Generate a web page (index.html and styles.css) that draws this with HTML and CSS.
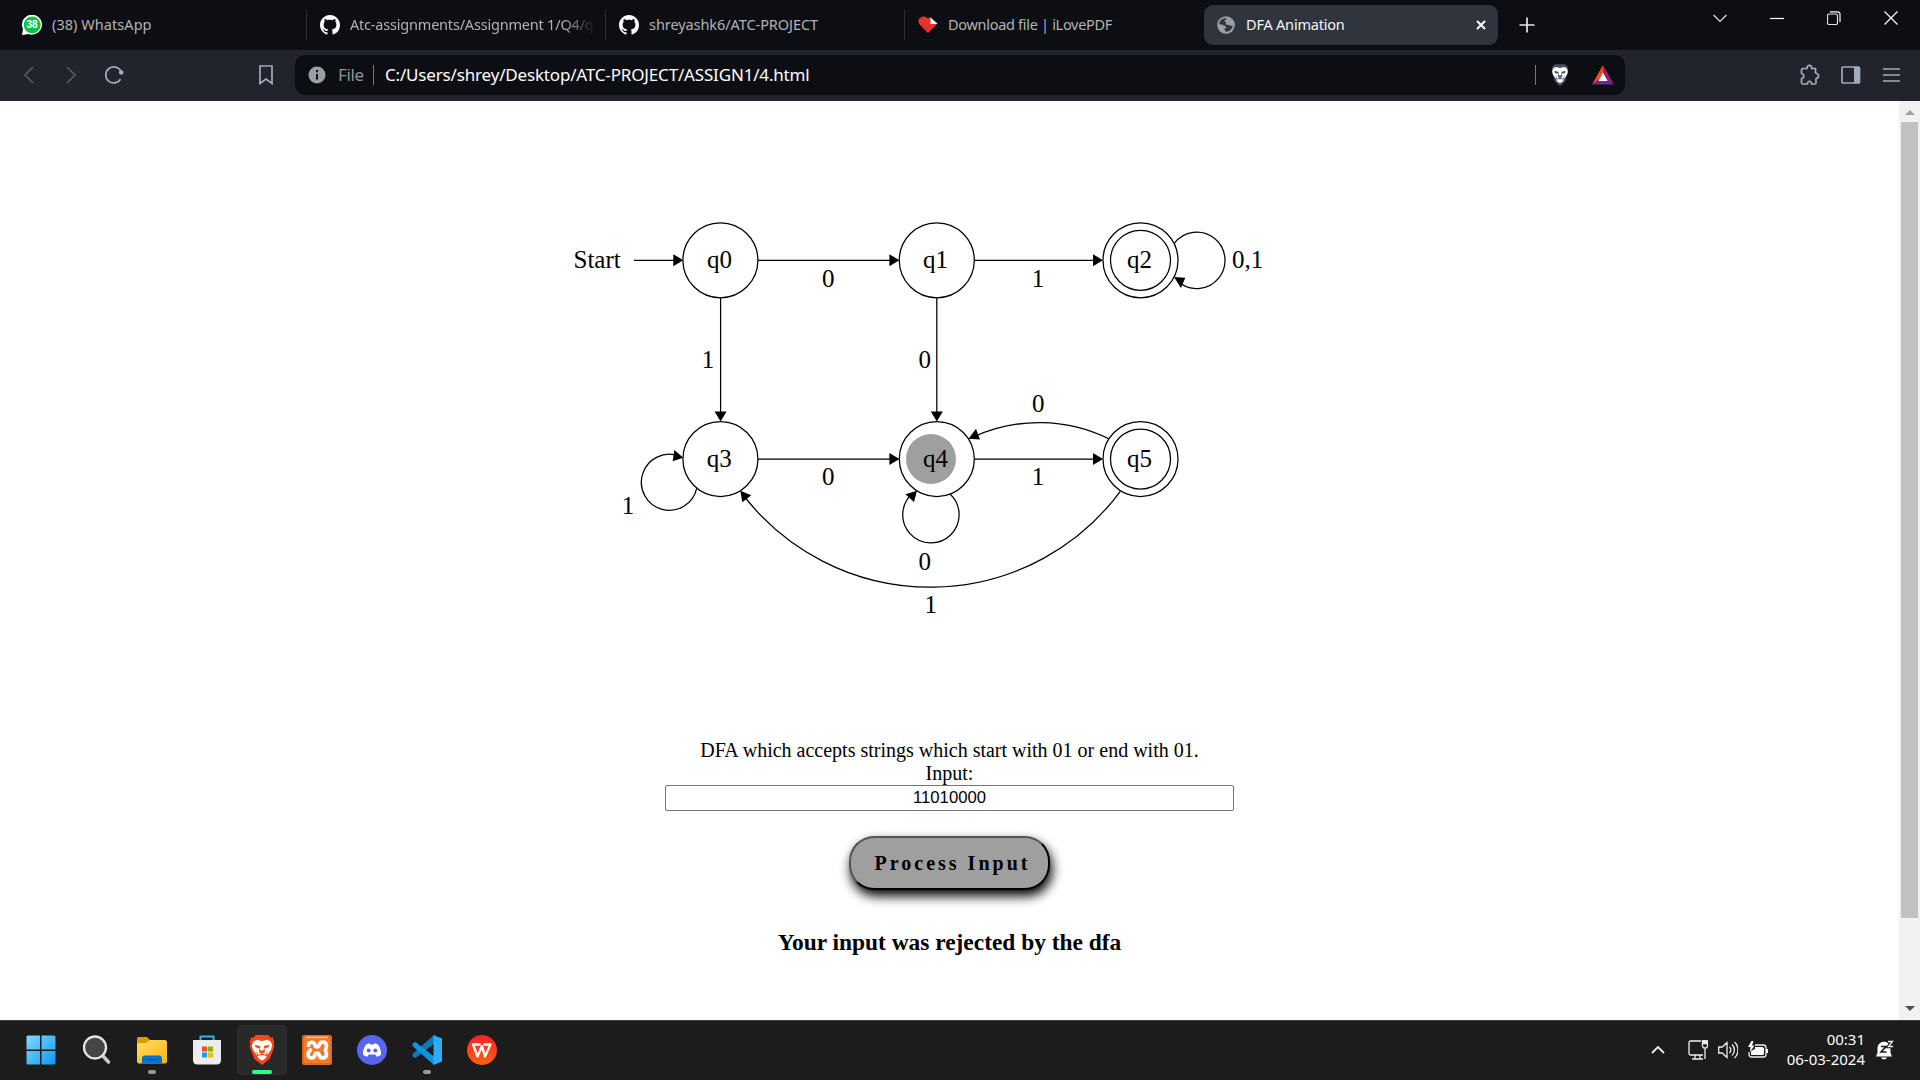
FILE: index.html
```html
<!DOCTYPE html>
<html lang="en">
<head>
<meta charset="utf-8">
<title>DFA Animation</title>
<link rel="stylesheet" href="styles.css">
</head>
<body>
<svg width="0" height="0" class="defs">
  <symbol id="github" viewBox="0 0 16 16"><path d="M8 0C3.58 0 0 3.58 0 8c0 3.54 2.29 6.53 5.47 7.59.4.07.55-.17.55-.38 0-.19-.01-.82-.01-1.49-2.01.37-2.53-.49-2.69-.94-.09-.23-.48-.94-.82-1.13-.28-.15-.68-.52-.01-.53.63-.01 1.08.58 1.23.82.72 1.21 1.87.87 2.33.66.07-.52.28-.87.51-1.07-1.78-.2-3.64-.89-3.64-3.95 0-.87.31-1.59.82-2.15-.08-.2-.36-1.02.08-2.12 0 0 .67-.21 2.2.82.64-.18 1.32-.27 2-.27s1.36.09 2 .27c1.53-1.04 2.2-.82 2.2-.82.44 1.1.16 1.92.08 2.12.51.56.82 1.27.82 2.15 0 3.07-1.87 3.75-3.65 3.95.29.25.54.73.54 1.48 0 1.07-.01 1.93-.01 2.2 0 .21.15.46.55.38A8.01 8.01 0 0 0 16 8c0-4.42-3.58-8-8-8z" fill="#fff"/></symbol>
  <symbol id="lionface" viewBox="0 0 24 28"><path d="M4 6l3-1.500 5 1 5-1L20 6l1.500 3.500-1 4-3 4.500-2.500 4-3 2-3-2-2.500-4-3-4.500-1-4z" fill="#fff"/><path d="M5.500 9l5 1.500-.7 2-4-1zM18.500 9L13.500 10.500l.7 2 4-1zM9.800 12l-.6 4 2.800 1.500 2.800-1.500-.6-4-1 2.500h-2.400zM6.500 14.500l2 4 3.500-1.200 3.500 1.200 2-4-1 5-4.500-.8-4.500.8z" class="mark"/></symbol>
</svg>

<header class="tabs">
  <div class="tab first">
    <svg width="20" height="20" viewBox="0 0 20 20"><path d="M0 20l1-6A10 10 0 1 1 6.500 19z" fill="#fff"/><circle cx="10.200" cy="10" r="8.500" fill="#12c143"/><text x="10" y="13.300" text-anchor="middle" class="badge">38</text></svg>
    <span class="t1">(38) WhatsApp</span>
  </div>
  <div class="tab">
    <svg width="20" height="20"><use href="#github"/></svg>
    <span class="clip t2">Atc-assignments/Assignment 1/Q4/q</span>
  </div>
  <div class="tab">
    <svg width="20" height="20"><use href="#github"/></svg>
    <span class="t3">shreyashk6/ATC-PROJECT</span>
  </div>
  <div class="tab">
    <svg width="20" height="20" viewBox="0 0 20 20"><path d="M10 18L1.500 9.500C-1 6 1.500 1.500 5.500 1.500c2 0 3.500 1 4.500 2L12 2l7.500 6.500z" fill="#e5322d"/><path d="M12.500 2.500V9h7z" fill="#fff"/></svg>
    <span class="t4">Download file | iLovePDF</span>
  </div>
  <div class="tab active">
    <svg width="18" height="18" viewBox="0 0 18 18"><circle cx="9" cy="9" r="8.800" fill="#9aa0a6"/><path d="M9.500 2.200C5.500 1.800 2.300 4.500 2.200 8.200c1.800 0 3.300.2 4.300 1 1 .8 2.500.3 2.500 1.800 0 1.300-1.500 1-1.500 2.300 0 1 .9 1 .9 2.400 3.700.3 7-2.500 7.300-6.200-1.200.3-2.200.5-3.200-.3-.8-.8-2.500.2-3.500-.7-.8-.8.500-2-.5-2.500C7.500 5.500 7 4.500 8 4c.8-.4 1.500-.8 1.500-1.800z" fill="#30343d"/></svg>
    <span class="t5">DFA Animation</span>
    <svg class="close" width="10" height="10" viewBox="0 0 10 10"><path d="M1 1l8 8M9 1L1 9" stroke="#fff" stroke-width="2"/></svg>
  </div>
  <svg class="plus" width="16" height="16" viewBox="0 0 16 16"><path d="M8 .5v15M.5 8h15" stroke="#e4e6ea" stroke-width="1.700"/></svg>
  <div class="winbtns">
    <svg width="14" height="14" viewBox="0 0 14 14"><path d="M.5 4l6.500 6.500L13.500 4"/></svg>
    <svg width="14" height="14" viewBox="0 0 14 14"><path d="M0 7.500h14" stroke="#fff"/></svg>
    <svg width="14" height="14" viewBox="0 0 14 14"><rect x=".5" y="3" width="10" height="10.500" rx="1.500"/><path d="M3 .8h7.500a2.500 2.500 0 0 1 2.500 2.500V11" stroke="#fff"/></svg>
    <svg width="14" height="14" viewBox="0 0 14 14"><path d="M.5.5l13 13M13.500.5l-13 13" stroke="#fff"/></svg>
  </div>
</header>

<nav class="toolbar">
  <svg class="dim" width="10" height="18" viewBox="0 0 10 18"><path d="M9 1L1 9l8 8"/></svg>
  <svg class="dim fwd" width="10" height="18" viewBox="0 0 10 18"><path d="M1 1l8 8-8 8"/></svg>
  <svg class="reload" width="20" height="20" viewBox="0 0 20 20"><path d="M16.500 14.300A8 8 0 1 1 17 6.500"/><circle cx="17.200" cy="7.500" r="2.300" fill="#a1abba" stroke="none"/></svg>
  <svg class="bookmark" width="14" height="20" viewBox="0 0 14 20"><path d="M1 1h12v17.500l-6-4.500-6 4.500z"/></svg>
  <div class="address">
    <svg width="18" height="18" viewBox="0 0 18 18"><circle cx="9" cy="9" r="8.500" fill="#9a9ea6"/><path d="M9 4v2.300M9 8v5.500" stroke="#0d0e13" stroke-width="2"/></svg>
    <span class="file">File</span><i class="bar"></i>
    <span class="url">C:/Users/shrey/Desktop/ATC-PROJECT/ASSIGN1/4.html</span>
    <i class="bar thin"></i>
    <svg class="shield" width="20" height="24" viewBox="0 0 24 28"><path d="M6 1h12l4 4-1 4 .5 2L18 22l-6 5.500L6 22 2.500 11 3 9 2 5z" fill="#4b4c5f"/><use href="#lionface"/></svg>
    <svg class="bat" width="22" height="20" viewBox="0 0 22 20"><path d="M11 0L0 19.500 11 12z" fill="#ff4724"/><path d="M11 0l11 19.500L11 12z" fill="#9e1f63"/><path d="M0 19.500h22L11 11z" fill="#662d91"/><path d="M11 7.500l4.500 8.500h-9z" fill="#fff"/></svg>
  </div>
  <svg class="puzzle" width="20" height="22" viewBox="0 0 20 22"><path d="M3 4.500h4c-.3-4.300 5-4.300 4.700 0H15.500V9c4 .7 4 5 .5 5.500v4.500l-1 1h-3.500c.3-3.500-4.300-3.500-4 0H2.500l-1-1v-4.500c3-.3 3-4.500 0-5V5.500z" stroke-linejoin="round"/></svg>
  <svg class="panel" width="20" height="18" viewBox="0 0 20 18"><rect x="1" y="1" width="17.500" height="16" rx="1"/><path d="M13 1h5.500v16H13z" fill="#a1abba" stroke="none"/></svg>
  <svg class="menu" width="18" height="14" viewBox="0 0 18 14"><path d="M0 1h17M0 7h17M0 13h17"/></svg>
</nav>

<div class="view">
  <main>
    <svg class="dfa" width="1899" height="630" viewBox="0 101 1899 630">
      <circle cx="931" cy="459" r="25" class="token"/>
      <g class="edge">
        <circle cx="720.400" cy="260.300" r="37.500"/><circle cx="936.800" cy="260.300" r="37.500"/>
        <circle cx="1140.500" cy="260.300" r="37.500"/><circle cx="1140.500" cy="260.300" r="30"/>
        <circle cx="720.400" cy="459" r="37.500"/><circle cx="936.800" cy="459" r="37.500"/>
        <circle cx="1140.500" cy="459" r="37.500"/><circle cx="1140.500" cy="459" r="30"/>
        <path d="M634 260.300h45M758 260.300h137M974.500 260.300h125M720.600 298v118M936.800 298v118M758 459.200h137M974.500 459.200h125"/>
        <path d="M1174.300 243.300A28.200 28.200 0 1 1 1179 282.200"/>
        <path d="M1108.700 438.700A157.600 157.600 0 0 0 974 436.700"/>
        <path d="M950 494A28.200 28.200 0 1 1 913 493"/>
        <path d="M696.700 488.300A28 28 0 1 1 679 456"/>
        <path d="M1120.300 491.300A236 236 0 0 1 744 496"/>
      </g>
      <path class="heads" d="M683.300 260.300l-10-6v12zM899.400 260.300l-10-6v12zM1103 260.300l-10-6v12zM899.400 459l-10-6v12zM1103 459l-10-6v12zM720.600 421.500l-6-10h12zM936.800 421.500l-6-10h12zM1174 277l11.300 .7-4.400 10.300zM968.500 438.700l7.500-10 4 10.800zM917 490.700l-11.600 3.600 8.600 7.700zM683.300 457.700l-9-7.700-1.600 11.300zM740.300 490.700l11 4.600-9 7z"/>
      <g class="lbl">
        <text x="573.500" y="268">Start</text>
        <text x="707" y="268">q0</text><text x="923" y="268">q1</text><text x="1127" y="268">q2</text>
        <text x="706.700" y="467">q3</text><text x="923" y="467">q4</text><text x="1127" y="467">q5</text>
        <text x="822" y="287">0</text><text x="1031.700" y="287">1</text><text x="1232" y="268">0,1</text>
        <text x="701.800" y="368">1</text><text x="918.500" y="368">0</text><text x="1032" y="412">0</text>
        <text x="621.700" y="514">1</text><text x="822" y="485">0</text><text x="1031.700" y="485">1</text>
        <text x="918.500" y="570">0</text><text x="924.500" y="613">1</text>
      </g>
    </svg>
    <p class="desc">DFA which accepts strings which start with 01 or end with 01.</p>
    <p class="desc">Input:</p>
    <input type="text" value="11010000">
    <button type="button">Process Input</button>
    <h3>Your input was rejected by the dfa</h3>
  </main>
  <aside class="scroll">
    <svg width="10" height="6"><path d="M0 6l5-5 5 5z" fill="#a3a3a3"/></svg>
    <div class="thumb"></div>
    <svg width="10" height="6"><path d="M0 0l5 5 5-5z" fill="#505050"/></svg>
  </aside>
</div>

<footer class="taskbar">
  <div class="app"><svg width="30" height="30" viewBox="0 0 30 30"><defs><linearGradient id="win" x1="0" y1="0" x2="1" y2="1"><stop offset="0" stop-color="#80dcfb"/><stop offset="1" stop-color="#0c95f8"/></linearGradient></defs><path d="M1.500 .5H14v14H.500V1.500zM15.500.5h13l1 1v13h-14zM.5 16H14v13.500H1.500l-1-1zM15.500 16h14v12.500l-1 1h-13z" fill="url(#win)"/></svg></div>
  <div class="app"><svg width="30" height="30" viewBox="0 0 30 30"><path d="M19.500 19.500l7 7.500" stroke="#c5cad3" stroke-width="3.500" stroke-linecap="round"/><circle cx="13" cy="12.500" r="11" fill="#454545" stroke="#e2e4e8" stroke-width="2.300"/></svg></div>
  <div class="app"><svg width="30" height="30" viewBox="0 0 30 30"><defs><linearGradient id="fold" x1="0" y1="0" x2="1" y2="1"><stop offset="0" stop-color="#ffdd68"/><stop offset="1" stop-color="#fcb50b"/></linearGradient></defs><path d="M0 3.500C0 2.500 1 2 2 2h8l4 4v8H0z" fill="#dd9c05"/><path d="M0 8h9l4-3h15.500L30 6.500V27l-1.500 1.500h-27L0 27z" fill="url(#fold)"/><path d="M5 28.500V23c0-1.500 1-2.500 2.500-2.500h15c1.500 0 2.500 1 2.500 2.500v5.500z" fill="#0b72c9"/><path d="M8.500 24.500h13" stroke="#064c91"/></svg><i class="run"></i></div>
  <div class="app"><svg width="30" height="30" viewBox="0 0 30 30"><path d="M8.500 6V1.500h13V6" fill="none" stroke="#26b6ee" stroke-width="2"/><path d="M1 5h28v20c0 3-1.500 4.500-4.500 4.500h-19C2.500 29.500 1 28 1 25z" fill="#ececec"/><path d="M10 11.500h5v5h-5z" fill="#f25022"/><path d="M16 11.500h5v5h-5z" fill="#7fba00"/><path d="M10 17.500h5v5h-5z" fill="#00a4ef"/><path d="M16 17.500h5v5h-5z" fill="#ffb900"/></svg></div>
  <div class="app on"><svg width="26" height="30" viewBox="0 0 24 28"><path d="M6 0h12l2 2.500 2-.3 1.500 4-.7 2 .7 3L19 22.500l-7 5.500-7-5.500L.5 11.200l.7-3-.7-2 1.500-4 2 .3z" fill="#fb4519"/><use href="#lionface"/></svg><i class="run"></i></div>
  <div class="app"><svg width="30" height="30" viewBox="0 0 30 30"><rect width="30" height="30" rx="2.500" fill="#f37a28"/><rect x="1" y="1" width="28" height="28" rx="2" fill="none" stroke="#c55f1b"/><path d="M4 2.300h22" stroke="#fbc49b" stroke-width="1.500"/><path d="M6.500 10.500c0-4 6-4.500 6.500 0 .3 2 3.700 2 4 0 .5-4.500 7.500-4.500 7.500 0 0 2-1 3-1 4.500s1 2.500 1 4.500c0 4.500-7 4.500-7.500 0-.3-2-3.700-2-4 0-.5 4.500-7 4.500-7 0 0-3 2-3.500 2.500-4.500" fill="none" stroke="#fff" stroke-width="3.600" stroke-linecap="round"/></svg></div>
  <div class="app"><svg width="30" height="30" viewBox="0 0 30 30"><circle cx="15" cy="15" r="15" fill="#5865f2"/><path d="M9 9.500l3.500-1.300 1 1.300h3l1-1.300L21 9.500c2.500 4 3.300 7 3 10.300-1.500 1.200-3 1.700-4.300 2l-1.500-2.300h-6.400l-1.500 2.300c-1.300-.3-2.800-.8-4.300-2C5.700 16.500 6.500 13.500 9 9.500z" fill="#fff"/><circle cx="11.700" cy="15.500" r="2" fill="#5865f2"/><circle cx="18.300" cy="15.500" r="2" fill="#5865f2"/></svg></div>
  <div class="app"><svg width="30" height="30" viewBox="0 0 30 30"><path d="M22 0v8.500L3.500 23 .5 21.500v-2.500z" fill="#0b78c2"/><path d="M22 30v-8.500L3.500 7 .5 8.500V11z" fill="#1094dc"/><path d="M21.500 0L30 3.500v23L21.500 30z" fill="#29aef5"/></svg><i class="run"></i></div>
  <div class="app"><svg width="30" height="30" viewBox="0 0 30 30"><defs><linearGradient id="wps" x1="0" y1="0" x2="0" y2="1"><stop offset="0" stop-color="#fb2020"/><stop offset="1" stop-color="#ff6312"/></linearGradient></defs><circle cx="15" cy="15" r="15" fill="url(#wps)"/><path d="M13.500 9.500H6L10.500 21.500 15 11l3 10.500 5.500-12H16.500" fill="none" stroke="#fff" stroke-width="2.300" stroke-linejoin="round"/></svg></div>
  <div class="tray">
    <svg class="up" width="14" height="8" viewBox="0 0 14 8"><path d="M1 7l6-6 6 6" stroke-width="1.800"/></svg>
    <svg class="net" width="20" height="20" viewBox="0 0 20 20"><path d="M13 1H2.500A1.500 1.500 0 0 0 1 2.500v11A1.500 1.500 0 0 0 2.500 15H15M4 19h11M7 15v4M12 15v4M14.500.8h5v5.500l-1 1.500h-3l-1-1.500zM17 8v11"/><path d="M14.500 1h5v2.500h-5z" fill="#eee"/></svg>
    <svg class="vol" width="20" height="18" viewBox="0 0 20 18"><path d="M.7 6h3.500L9 1.500v15L4.200 12H.7zM11.500 6a4 4 0 0 1 0 6M14 3.500a7.500 7.500 0 0 1 0 11M16.500 1a11 11 0 0 1 0 16"/></svg>
    <svg class="bat2" width="20" height="18" viewBox="0 0 20 18"><path d="M7 4h8.500A2.500 2.500 0 0 1 18 6.500v7a2.500 2.500 0 0 1-2.500 2.500H3.500A2.500 2.500 0 0 1 1 13.500V11"/><path d="M7 6h7.500L16 7v6l-1 1H3v-4l4-2zM3.500 0L0 6h2.500L2 11l4.500-6.500H4L5.500 0zM18 8h2v4h-2z" fill="#fff" stroke="none"/></svg>
    <div class="clock"><span>00:31</span><span>06-03-2024</span></div>
    <svg width="18" height="20" viewBox="0 0 18 20"><path d="M0 16.500L1.500 13V8.500C1.500-.5 14.500-.5 14.500 8.500V13l1.500 3.500zM5 17.500h6c-1 2.500-5 2.500-6 0z" fill="#fff" stroke="none"/><path d="M5 6.500h5l-5 5.500h5.500" stroke="#1c1c1c" stroke-width="1.600"/><path d="M12 1.500h4.500l-4 5H17" stroke="#1c1c1c" stroke-width="3.500"/><path d="M12 1.500h4.500l-4 5H17"/></svg>
  </div>
</footer>
</body>
</html>
```
FILE: styles.css
```css
* { box-sizing: border-box; }
body { margin: 0; width: 1920px; height: 1080px; overflow: hidden; display: flex; flex-direction: column; background: #fff; font-family: "Noto Sans", "Open Sans", sans-serif; }
svg { flex: none; display: block; }
.defs { position: absolute; }
.mark { fill: var(--mark, #4b4c5f); }

.tabs { height: 50px; flex: none; display: flex; align-items: center; background: #0d0e13; color: #b1b3b6; font-size: 14.500px; }
.tab { width: 299px; height: 30px; padding-left: 13px; border-left: 1px solid #2c2d32; display: flex; align-items: center; gap: 10px; white-space: nowrap; }
.tab span { padding-bottom: 2px; }
.tab.first { width: 306px; padding-left: 22px; border: 0; }
.tab.active { width: 294px; height: 40px; margin-left: 1px; padding: 0 12px 0 13px; border: 0; border-radius: 9px; background: #30343d; color: #f4f5f7; }
.tab .close { margin-left: auto; }
.clip { width: 245px; overflow: hidden; -webkit-mask-image: linear-gradient(90deg, #000 87%, transparent); mask-image: linear-gradient(90deg, #000 87%, transparent); }
.t1 { letter-spacing: 0.05px; }
.t2 { letter-spacing: -0.2px; }
.t3 { letter-spacing: -0.07px; }
.t4 { letter-spacing: -0.3px; }
.t5 { margin-left: 1px; letter-spacing: -0.2px; }
.badge { font: bold 10px "Liberation Sans", sans-serif; fill: #fff; }
.plus { margin-left: 21px; }
.winbtns { margin-left: auto; padding: 0 22px 14px 0; display: flex; gap: 43px; }
.winbtns svg { fill: none; stroke: #e0e0e0; stroke-width: 1.200; }

.toolbar { height: 51px; flex: none; display: flex; align-items: center; padding: 0 0 1px 24px; background: #21242c; }
.toolbar > svg { fill: none; stroke: #a1abba; stroke-width: 1.700; }
.toolbar .dim { stroke: #555a64; }
.fwd { margin-left: 32px; }
.reload { margin-left: 28px; }
.bookmark { margin-left: 135px; }
.address { width: 1330px; height: 40px; margin-left: 22px; padding: 0 11px 0 13px; display: flex; align-items: center; border-radius: 10px; background: #0d0e13; font-size: 17px; white-space: nowrap; }
.address span { padding-bottom: 2px; }
.file { width: 28px; margin-left: 12px; color: #8e929a; letter-spacing: -0.4px; }
.bar { width: 1px; height: 20px; margin-left: 7px; background: #74777d; }
.bar.thin { margin-left: auto; }
.url { margin-left: 11px; color: #fff; letter-spacing: -0.170px; }
.shield { margin-left: 14px; }
.bat { margin-left: 22px; }
.puzzle { margin-left: 175px; }
.panel { margin-left: 21px; }
.menu { margin-left: 22px; }

.view { flex: 1; display: flex; min-height: 0; }
main { width: 1899px; display: flex; flex-direction: column; align-items: center; font-family: "Liberation Serif", serif; color: #000; }
.token { fill: #9f9f9f; }
.edge { fill: none; stroke: #000; stroke-width: 1.250; }
.lbl { font-size: 25px; }
.desc { margin: 8px 0 0; font-size: 20px; line-height: 23px; }
.desc + .desc { margin: 0; }
main input { width: 569px; height: 26px; margin: 0; padding: 0; border: 1px solid #767676; border-radius: 2px; text-align: center; font: 16.670px "Liberation Sans", sans-serif; color: #000; }
main button { width: 201px; height: 54px; margin: 25px 0 0; padding: 0 0 0 6px; border: 2px outset #000; border-radius: 25px; background: #9f9f9f; color: #000; box-shadow: 2px 6px 12px #000; font: bold 20px "Liberation Serif", serif; letter-spacing: 3px; white-space: nowrap; }
h3 { margin: 39px 0 0; font-size: 23.400px; line-height: 26px; }

.scroll { width: 21px; display: flex; flex-direction: column; align-items: center; padding: 8px 0 8px; background: #f1f1f1; }
.thumb { width: 17px; height: 796px; margin: 7px 0 auto; background: #c1c1c1; }

.taskbar { height: 60px; flex: none; display: flex; align-items: center; gap: 5px; padding: 0 0 1px 17px; border-top: 1px solid #3c3c3c; background: #1c1c1c; }
.app { position: relative; width: 50px; height: 50px; display: flex; align-items: center; justify-content: center; border-radius: 5px; }
.app:first-child { width: 48px; margin-right: 2px; }
.app.on { --mark: #fb4519; background: #292929; border: 1px solid #303030; }
.run { position: absolute; bottom: 1px; left: 21px; width: 8px; height: 4px; border-radius: 2px; background: #999; }
.on .run { bottom: 0; left: 14px; width: 20px; background: #2dff87; }
.tray { margin-left: auto; padding-right: 26px; display: flex; align-items: center; color: #fff; }
.tray svg { fill: none; stroke: #eee; stroke-width: 1.300; }
.net { margin-left: 23px; }
.vol, .bat2 { margin-left: 10px; }
.clock { width: 98px; margin-right: 10px; padding: 0 1px 2px 0; margin-left: 0; display: flex; flex-direction: column; align-items: flex-end; font-size: 15px; line-height: 20px; letter-spacing: 0; }
```
